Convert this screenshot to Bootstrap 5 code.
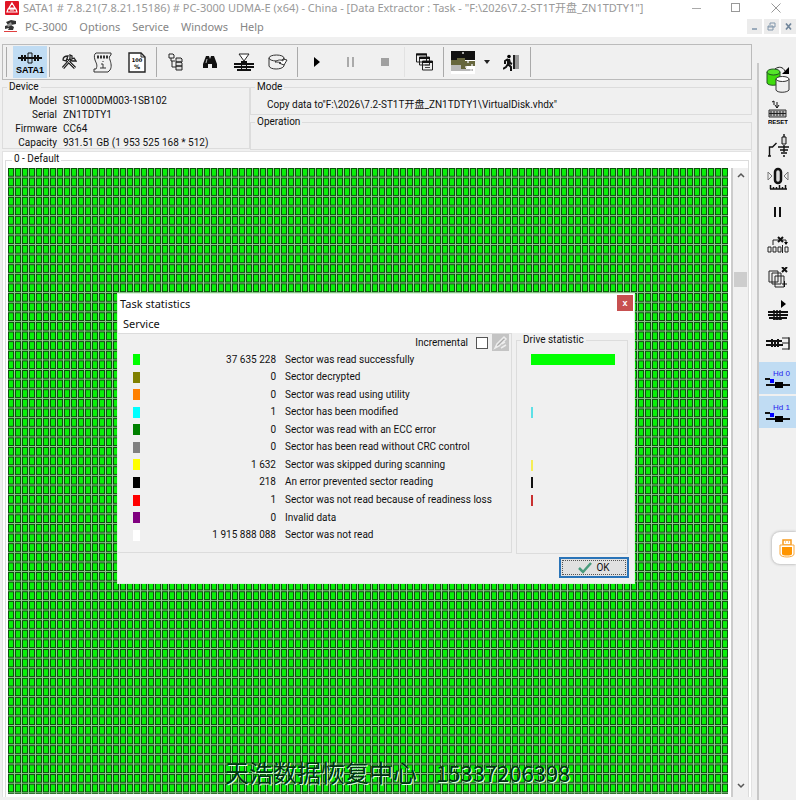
<!DOCTYPE html>
<html lang="en">
<head>
<meta charset="utf-8">
<meta name="viewport" content="width=device-width, initial-scale=1">
<title>PC-3000 Data Extractor</title>
<link href="https://cdn.jsdelivr.net/npm/bootstrap@5.3.0/dist/css/bootstrap.min.css" rel="stylesheet">
<style>
body{font:10px/14px Roboto,"Liberation Sans","Noto Sans CJK SC",sans-serif;color:#111;background:#f0f0f0}
button{font:inherit;color:inherit;border:0;background:none;padding:0}
svg{display:block;flex:none}
.ui-title,.ui-menu{font-family:"Noto Sans","Noto Sans CJK SC",sans-serif;font-size:11px;color:#999;background:#fff}
.ui-title{height:16px;line-height:16px;padding-left:5px}
.ui-title .cap{width:40px;height:16px}
.ui-menu{height:21px;padding-left:4px}
.ui-menu a{color:#858585;text-decoration:none;margin-right:12px}
.mdi{width:15px;height:15px;margin-left:2px;background:#ececec}
.ui-left{padding:7px 5px 3px 2px}
.tools{height:36px;border:1px solid #bbb;padding-left:1px}
.tbtn{width:34px;height:32px}
.on{background:#c0dcf3}
.sep{width:5px;height:30px;background:linear-gradient(#aaa,#aaa) 2px 0/1px 100% no-repeat}
.sep.pale{opacity:.2}
fieldset{border:1px solid #dcdcdc;min-width:0}
legend{float:none;width:auto;font-size:10px;line-height:14px;margin:0 0 0 4px;padding:0 2px}
.info{height:69px}
.device{width:248px}
.device dl{display:grid;grid-template-columns:54px 1fr;column-gap:6px}
.device dt{font-weight:400;text-align:right}
.device dd{margin:0}
.half{height:35px}
.map{background:#fff;margin-top:2px;padding:0 2px 0 2px;border:1px solid #e2e2e2;border-bottom:0}
.map fieldset{padding:0 0 0 2px;border-bottom:0}
.map legend{padding-bottom:2px}
.cells{min-height:300px;margin-bottom:3px}
.scroll{width:17px;margin-left:3px;background:#f0f0f0;border-left:2px solid #ccc}
.thumb{height:15px;margin:94px 1px 0 1px;background:#cdcdcd}
.side{width:39px;margin-top:26px;border-left:2px solid #c8c8c8}
.sbtn{width:37px;height:33px}
.sbtn.on{height:32px;margin-top:2px}
.dlg{position:absolute;left:118px;top:294px;width:516px;background:#f0f0f0;box-shadow:0 0 0 1px #d8f4d8}
.dlg-top{background:#fff;font-family:"Noto Sans",sans-serif;font-size:11px;height:39px}
.dlg-top h1{font-size:11px;line-height:20px;font-weight:400;margin:0;padding-left:2px}
.xbtn{width:16px;height:16px;background:#c75050;color:#fff;font:bold 9px/14px "Liberation Sans",sans-serif;margin:1px 1px 0 0}
.dlg-top a{color:#111;text-decoration:none;padding-left:5px;line-height:20px}
.list-pane{width:394px;height:220px;border:1px solid #dcdcdc;border-left:0}
.incr{padding-right:2px}
.stats{width:100%;height:193px}
.stats td{padding:0;vertical-align:middle;line-height:14px}
.stats .sw{width:38px;padding-left:15px}
.stats .num{width:129px;text-align:right;padding-right:9px}
.chip{display:block;width:7px;height:11px}
.drive{width:112px;height:221px;margin-left:4px}
.bars{display:grid;grid-template-rows:repeat(11,1fr);height:193px;margin-top:4px;padding-left:14px;align-items:center}
.bars span{height:11px;width:2px}
.bars .full{width:84px}
.okbtn{width:70px;height:21px;border:2px solid #2a74b8;background:#e1e1e1;outline:1px dotted #555;outline-offset:-4px;margin:3px 5px 5px 0}
.tick-box{appearance:none;width:12px;height:12px;border:1px solid #555;background:#fff;margin:0}
.edit{width:17px;height:17px;background:#c4c4c4}
.caption{position:absolute;left:0;right:0;bottom:11px;padding-left:0;font:24px/34px "Noto Sans CJK SC",sans-serif;color:#031;text-shadow:1px 1px 0 #dfd;pointer-events:none}
.caption .tel{font-size:22px;margin-left:19px}
.caption p{margin:0 0 0 225px}
.usb{position:absolute;right:0;top:532px;width:24px;height:32px;background:#fff;border-radius:8px 0 0 8px;box-shadow:0 0 3px #999;padding:0 0 0 7px}
</style>
<script src="https://cdn.jsdelivr.net/npm/bootstrap@5.3.0/dist/js/bootstrap.bundle.min.js"></script>
</head>
<body class="position-relative d-flex flex-column min-vh-100 overflow-hidden">
<header>
<div class="ui-title d-flex align-items-center">
<svg width="14" height="14" viewBox="0 0 14 14"><rect width="14" height="14" rx="1" fill="#e01525"/><path d="M7 2 10 7H4ZM3 8h8l1 3H2Z" fill="none" stroke="#fff" stroke-width="1.2"/><path d="M5 9h4" stroke="#fff"/></svg>
<span class="ms-1 me-auto text-nowrap">SATA1 # 7.8.21(7.8.21.15186) # PC-3000 UDMA-E (x64) - China - [Data Extractor : Task - "F:\2026\7.2-ST1T开盘_ZN1TDTY1"]</span>
<button class="cap d-flex align-items-center justify-content-center" aria-label="Minimize"><svg width="10" height="10"><path d="M1 5.500h9" stroke="#aaa"/></svg></button>
<button class="cap d-flex align-items-center justify-content-center" aria-label="Maximize"><svg width="10" height="10"><rect x=".5" y=".5" width="8" height="8" fill="none" stroke="#999"/></svg></button>
<button class="cap d-flex align-items-center justify-content-center" aria-label="Close"><svg width="10" height="10"><path d="m.5.500 9 9m0-9-9 9" stroke="#999"/></svg></button>
</div>
<nav class="ui-menu d-flex align-items-center">
<svg class="me-2" width="13" height="13" viewBox="0 0 13 13"><path d="M2 2 7 0l5 1v3L7 5l3 2-1 3H4l1-2-4 1V6l3-1Z" fill="#333"/><path d="m3 5 4-3 1 3-4 2Z" fill="#999"/><path d="M0 11.500h13" stroke="#e04040"/></svg>
<a href="#">PC-3000</a><a href="#">Options</a><a href="#">Service</a><a href="#">Windows</a><a href="#" class="me-auto">Help</a>
<button class="mdi d-flex align-items-center justify-content-center" aria-label="Minimize child"><svg width="9" height="9"><path d="M2 7h5" stroke="#8196ab" stroke-width="1.500"/></svg></button>
<button class="mdi d-flex align-items-center justify-content-center" aria-label="Restore child"><svg width="9" height="9"><path d="M3 3V1h5v4H6M1 4h5v4H1ZM1 5h5" fill="none" stroke="#8196ab"/></svg></button>
<button class="mdi d-flex align-items-center justify-content-center" aria-label="Close child"><svg width="9" height="9"><path d="m2 1.500 5 6m0-6-5 6" stroke="#71869b" stroke-width="1.700"/></svg></button>
</nav>
</header>
<div class="d-flex flex-grow-1">
<main class="ui-left flex-grow-1 d-flex flex-column">
<div class="tools d-flex align-items-center" role="toolbar">
<span class="sep me-1"></span>
<button class="tbtn on d-grid justify-content-center align-content-center" aria-label="SATA1"><svg width="30" height="28" viewBox="0 0 30 28"><path d="M3 10h24M7 7v6M10 7v6M20 7v6M23 7v6" stroke="#111" stroke-width="2"/><path d="M13 5v10M17 5v10M13 5h4M13 15h4" stroke="#111"/><text x="15" y="25" text-anchor="middle" font-family="Liberation Sans" font-weight="700" font-size="9">SATA1</text></svg></button>
<span class="sep"></span>
<button class="tbtn d-grid justify-content-center align-content-center" aria-label="Utilities"><svg width="16" height="16" viewBox="0 0 16 16"><path d="m2 14 8-9M14 14 5 5" stroke="#222" stroke-width="3"/><path d="m2 14 8-9M14 14 5 5" stroke="#eee" stroke-width=".8"/><path d="M2 6c0-3 2-4 5-4L5 7ZM9 1v4l2 2h4l-2-3-2 1V2Z" fill="#eee" stroke="#222" stroke-width="1.300"/></svg></button>
<button class="tbtn d-grid justify-content-center align-content-center" aria-label="Drive information"><svg width="20" height="21" viewBox="0 0 20 21"><path d="M3 1h15v2c-2 1-2 3-1 5 1 3 2 7 0 10l-2 2H1v-3h2c2-4 0-6-1-9C1 5 1 2 3 1Z" fill="none" stroke="#333"/><path d="M4 5h11" stroke="#333" stroke-width="3" stroke-dasharray="2 1"/><path d="M10 9v1m-2 2h2v4m-3 0h6" fill="none" stroke="#333"/></svg></button>
<button class="tbtn d-grid justify-content-center align-content-center" aria-label="Progress report"><svg width="18" height="21" viewBox="0 0 18 21"><path d="M1 1h12l4 4v15H1Z" fill="#fff" stroke="#222" stroke-width="1.400"/><path d="M13 1v4h4" fill="none" stroke="#222"/><text x="9" y="10" text-anchor="middle" font-family="DejaVu Sans" font-weight="700" font-size="5">100</text><text x="9" y="17" text-anchor="middle" font-family="DejaVu Sans" font-weight="700" font-size="6">%</text></svg></button>
<span class="sep"></span>
<button class="tbtn d-grid justify-content-center align-content-center" aria-label="Map tree"><svg width="16" height="18" viewBox="0 0 16 18"><path d="M1 1h4l1 1v3H1ZM3 5v3h4m-3 0v6h4" fill="none" stroke="#222"/><path d="M8 5h5l1 1v3H8ZM8 9h5l1 1v3H8ZM8 13h6v4H8Z" fill="#ddd" stroke="#222"/></svg></button>
<button class="tbtn d-grid justify-content-center align-content-center" aria-label="Find"><svg width="14" height="13" viewBox="0 0 14 13"><path d="M3 0h3l1 3 1-3h3l3 8v4H9V8H5v4H0V8Z" fill="#111"/><path d="M4 3 3 7" stroke="#ddd" stroke-width=".8"/></svg></button>
<button class="tbtn d-grid justify-content-center align-content-center" aria-label="Head map"><svg width="20" height="19" viewBox="0 0 20 19"><path d="M5 1h10l-5 7Z" fill="#fff" stroke="#222"/><path d="M0 11h20M0 14h20M3 17h14" stroke="#111" stroke-width="2"/><path d="M7 8h6v10H7Z" fill="#111"/><path d="M8 12.500h4M8 15.500h4" stroke="#ddd"/></svg></button>
<button class="tbtn d-grid justify-content-center align-content-center" aria-label="Export"><svg width="20" height="16" viewBox="0 0 20 16"><path d="M1 4v8c1 4 13 4 15 0v-2M16 6V4" fill="none" stroke="#333"/><ellipse cx="8.500" cy="4" rx="7.500" ry="3" fill="none" stroke="#333"/><path d="M7 8c4-3 6-2 8-1V5l4 1-3 5-5-2h2c-1-1-4-1-6-1Z" fill="#fff" stroke="#333"/></svg></button>
<span class="sep"></span>
<button class="tbtn d-grid justify-content-center align-content-center" aria-label="Start"><svg width="6" height="10"><path d="m0 0 6 5-6 5Z"/></svg></button>
<button class="tbtn d-grid justify-content-center align-content-center" aria-label="Pause"><svg width="8" height="10"><path d="M1 0v10M6 0v10" stroke="#aaa" stroke-width="2"/></svg></button>
<button class="tbtn d-grid justify-content-center align-content-center" aria-label="Stop"><svg width="8" height="8"><path d="M0 0h8v8H0Z" fill="#a0a0a0"/></svg></button>
<span class="sep pale"></span>
<button class="tbtn d-grid justify-content-center align-content-center" aria-label="Windows list"><svg width="17" height="18" viewBox="0 0 17 18"><g fill="#eee" stroke="#222"><path d="M.5 1h10v8H.5ZM3.500 4h10v8h-10ZM6.500 8h10v9h-10Z"/></g><path d="M0 1.500h11M3 5h11M6 9h11" stroke="#111" stroke-width="2"/><path d="M9 12h5M9 14.500h5" stroke="#444"/></svg></button>
<span class="sep"></span>
<button class="tbtn d-grid justify-content-center align-content-center" aria-label="Colour map"><svg width="24" height="23" viewBox="0 0 24 23"><path d="M0 0h24v23H0Z" fill="#fff"/><path d="M0 0h24v9H0Z" fill="#111"/><path d="M0 9h6V7h8v3h10v5h-9v3h-5v-4H0Z" fill="#66663c"/><path d="M0 14h10v4h12v2H0Z" fill="#b8b8b8"/><path d="M11 2h2M16 11h2M20 14h2M14 16h2M19 19h2" stroke="#ddd" stroke-width="1.500"/></svg></button>
<button class="d-flex justify-content-center px-1" aria-label="Colour map options"><svg width="6" height="4"><path d="M0 0h6L3 4Z" fill="#222"/></svg></button>
<button class="tbtn d-grid justify-content-center align-content-center" aria-label="Exit"><svg width="17" height="17" viewBox="0 0 17 17"><path d="M10 1h2v14h-2Z" fill="#222"/><path d="M12 1h4v14h-4Z" fill="#999"/><circle cx="6" cy="2.500" r="1.800"/><path d="M5 5 2 7v3M6 5l1 4 2 1M5 5v5l3 3v4M5 10l-2 3-3 2" fill="none" stroke="#111" stroke-width="2"/></svg></button>
<span class="sep"></span>
</div>
<section class="info d-flex">
<fieldset class="device"><legend>Device</legend><dl class="mb-0"><dt>Model</dt><dd>ST1000DM003-1SB102</dd><dt>Serial</dt><dd>ZN1TDTY1</dd><dt>Firmware</dt><dd>CC64</dd><dt>Capacity</dt><dd>931.51 GB (1 953 525 168 * 512)</dd></dl></fieldset>
<div class="flex-grow-1">
<fieldset class="half"><legend>Mode</legend><div class="ps-3 pt-1">Copy data to"F:\2026\7.2-ST1T开盘_ZN1TDTY1\VirtualDisk.vhdx"</div></fieldset>
<fieldset class="half"><legend>Operation</legend></fieldset>
</div>
</section>
<section class="map flex-grow-1 d-flex">
<fieldset class="flex-grow-1 d-flex flex-column"><legend>0 - Default</legend>
<div class="d-flex flex-grow-1">
<div class="cells flex-grow-1 position-relative"><svg class="position-absolute w-100 h-100" aria-label="Sector map"><defs><pattern id="cell" width="7" height="9.620" patternUnits="userSpaceOnUse"><path d="M0 0h7v10H0Z" fill="#96c896"/><path d="M0 0h6v8.700H0Z" fill="#0d4f0d"/><path d="M1 1h4v6.700H1Z" fill="#08f008"/></pattern></defs><rect width="100%" height="100%" fill="url(#cell)"/></svg></div>
<div class="scroll d-flex flex-column">
<svg class="mx-auto mt-1" width="8" height="6"><path d="m1 5 3-3 3 3" fill="none" stroke="#555" stroke-width="1.500"/></svg>
<div class="thumb"></div>
<svg class="mx-auto mt-auto mb-2" width="8" height="6"><path d="m1 1 3 3 3-3" fill="none" stroke="#555" stroke-width="1.500"/></svg>
</div>
</div>
</fieldset>
</section>
</main>
<aside class="side flex-shrink-0" role="toolbar">
<button class="sbtn d-grid justify-content-center align-content-center" aria-label="Copy drive"><svg width="24" height="28" viewBox="0 0 24 28"><path d="M1 6v11c1 3 11 3 13 0V6" fill="#3fdc0c" stroke="#252"/><ellipse cx="7.500" cy="6" rx="6.500" ry="3" fill="#55e52a" stroke="#252"/><path d="M10 13v11c1 3 11 3 13 0V13" fill="#eee" stroke="#333"/><ellipse cx="16.500" cy="13" rx="6.500" ry="2.500" fill="#fff" stroke="#333"/><path d="M9 3c4-3 8-2 10 2" fill="none" stroke="#222"/><path d="M23 1v7h-7Z"/></svg></button>
<button class="sbtn d-grid justify-content-center align-content-center" aria-label="Reset"><svg width="20" height="25" viewBox="0 0 20 25"><path d="m4 2 2-1v4M9 2v6M7 5l2 3 2-3" fill="none" stroke="#111"/><path d="M1 10h17v7H1Z" fill="#bbb" stroke="#333"/><path d="M3 11v5m3-5v5m3-5v5m3-5v5m3-5v5M1 13.500h17" stroke="#222"/><text x="10" y="24" text-anchor="middle" font-family="Liberation Sans" font-weight="700" font-size="6">RESET</text></svg></button>
<button class="sbtn d-grid justify-content-center align-content-center" aria-label="Power"><svg width="22" height="23" viewBox="0 0 22 23"><path d="M1 22h3M2.500 22v-9h3l4-4M11 13h11M17 0v4m0 7v7M13 16h8M14 19h6m-4 3h2" fill="none" stroke="#111" stroke-width="1.400"/><path d="M15 3h4v7h-4Z" fill="#ddd" stroke="#111"/></svg></button>
<button class="sbtn d-grid justify-content-center align-content-center" aria-label="Position"><svg width="22" height="24" viewBox="0 0 22 24"><path d="m1 5 4 4-4 4ZM21 5l-4 4 4 4Z" fill="#eee" stroke="#777"/><rect x="8" y="2" width="6" height="14" rx="3" fill="#ddd" stroke="#111" stroke-width="2.500"/><path d="M3 22h17M3.500 18v4m3-2v2m3-2v2m3-4v4m3-2v2m3-4v4" stroke="#111" stroke-width="1.500"/></svg></button>
<button class="sbtn d-grid justify-content-center align-content-center" aria-label="Pause task"><svg width="8" height="10"><path d="M1 0v10M6 0v10" stroke="#111" stroke-width="2"/></svg></button>
<button class="sbtn d-grid justify-content-center align-content-center" aria-label="Clear sectors"><svg width="22" height="18" viewBox="0 0 22 18"><path d="M1 11h3v5H1ZM6 11h3v5H6ZM11 11h3v5h-3ZM18 11h3v5h-3ZM15.500 9v8M6 9V4h13v4" fill="none" stroke="#222"/><path d="m11 1 5 5m0-5-5 5" stroke="#111" stroke-width="2"/><path d="m17 6 2 3 2-3Z"/></svg></button>
<button class="sbtn d-grid justify-content-center align-content-center" aria-label="Clear copies"><svg width="20" height="21" viewBox="0 0 20 21"><g fill="#eee" stroke="#222"><path d="M1 4h9v11H1ZM4 6h9v11H4ZM7 9h9v11H7Z"/></g><path d="m14 0 5 5m0-5-5 5" stroke="#111" stroke-width="2"/><path d="M14 17h5M16.500 14v6" stroke="#111"/></svg></button>
<button class="sbtn d-grid justify-content-center align-content-center" aria-label="Start heads"><svg width="20" height="21" viewBox="0 0 20 21"><path d="m13 0 5 4-5 4Z"/><path d="M0 12h20M0 15h20M1 18h18" stroke="#111" stroke-width="2"/><path d="M6 10v10M9 10v10M12 10v10M5 19h9" stroke="#111" stroke-width="1.500"/></svg></button>
<button class="sbtn d-grid justify-content-center align-content-center" aria-label="Heads"><svg width="24" height="13" viewBox="0 0 24 13"><path d="M0 4h16M0 8h17M6 2v8M9 3v7M12 2v8" stroke="#111" stroke-width="2"/><path d="M16 1h7v11h-7M16 6h7M23 0v13" fill="none" stroke="#222"/></svg></button>
<button class="sbtn on d-grid justify-content-center align-content-center" aria-label="Hd 0"><svg width="26" height="24" viewBox="0 0 26 24"><text x="25" y="10" text-anchor="end" font-family="Liberation Sans" font-size="8" fill="#22e">Hd 0</text><path d="M0 13h5M1 19h24" stroke="#111" stroke-width="2"/><path d="M5 13h4v4H5Z" fill="#00f"/><path d="M10 16h8v6h-8Z"/></svg></button>
<button class="sbtn on d-grid justify-content-center align-content-center" aria-label="Hd 1"><svg width="26" height="24" viewBox="0 0 26 24"><text x="25" y="10" text-anchor="end" font-family="Liberation Sans" font-size="8" fill="#22e">Hd 1</text><path d="M0 13h5M1 19h24" stroke="#111" stroke-width="2"/><path d="M5 13h4v4H5Z" fill="#00f"/><path d="M10 16h8v6h-8Z"/></svg></button>
</aside>
</div>
<div class="dlg" role="dialog" aria-labelledby="dlg-title">
<div class="dlg-top"><div class="d-flex justify-content-between"><h1 id="dlg-title">Task statistics</h1><button class="xbtn" aria-label="Close dialog">x</button></div><a href="#">Service</a></div>
<div class="d-flex">
<div class="list-pane">
<div class="incr d-flex justify-content-end align-items-center gap-1"><label for="inc">Incremental</label><input class="tick-box ms-1" type="checkbox" id="inc"><button class="edit" aria-label="Edit"><svg width="17" height="17"><path d="m3 14 2-4 7-7 2 2-7 7Zm7-4 3-2m-4 6 5-3" fill="#aaa" stroke="#eee" stroke-width="1.500"/></svg></button></div>
<table class="stats"><tbody>
<tr><td class="sw"><span class="chip" style="background:#0f0"></span></td><td class="num">37 635 228</td><td>Sector was read successfully</td></tr>
<tr><td class="sw"><span class="chip" style="background:#808000"></span></td><td class="num">0</td><td>Sector decrypted</td></tr>
<tr><td class="sw"><span class="chip" style="background:#ff8000"></span></td><td class="num">0</td><td>Sector was read using utility</td></tr>
<tr><td class="sw"><span class="chip" style="background:#0ff"></span></td><td class="num">1</td><td>Sector has been modified</td></tr>
<tr><td class="sw"><span class="chip" style="background:#008000"></span></td><td class="num">0</td><td>Sector was read with an ECC error</td></tr>
<tr><td class="sw"><span class="chip" style="background:#808080"></span></td><td class="num">0</td><td>Sector has been read without CRC control</td></tr>
<tr><td class="sw"><span class="chip" style="background:#ff0"></span></td><td class="num">1 632</td><td>Sector was skipped during scanning</td></tr>
<tr><td class="sw"><span class="chip" style="background:#000"></span></td><td class="num">218</td><td>An error prevented sector reading</td></tr>
<tr><td class="sw"><span class="chip" style="background:#f00"></span></td><td class="num">1</td><td>Sector was not read because of readiness loss</td></tr>
<tr><td class="sw"><span class="chip" style="background:#800080"></span></td><td class="num">0</td><td>Invalid data</td></tr>
<tr><td class="sw"><span class="chip" style="background:#fff"></span></td><td class="num">1 915 888 088</td><td>Sector was not read</td></tr>
</tbody></table>
</div>
<fieldset class="drive"><legend>Drive statistic</legend><div class="bars"><span class="full" style="background:#0f0"></span><i></i><i></i><span style="background:#5de0e6"></span><i></i><i></i><span style="background:#f5ee55"></span><span style="background:#111"></span><span style="background:#c83030"></span><i></i><i></i></div></fieldset>
</div>
<div class="d-flex justify-content-end"><button class="okbtn d-flex align-items-center justify-content-center"><svg class="me-1" width="14" height="12"><path d="m1 6 4 4 8-9" fill="none" stroke="#4a9b7d" stroke-width="2.500"/></svg>OK</button></div>
</div>
<div class="caption"><p>天浩数据恢复中心<span class="tel">15337206398</span></p></div>
<button class="usb" aria-label="USB drive"><svg width="16" height="19" viewBox="0 0 16 19"><path d="M4 1h8v5H4Z" fill="#fff" stroke="#f79a1c" stroke-width="1.500"/><path d="M6 3h1m2 0h1" stroke="#f79a1c"/><path d="M1 6h14v9c0 4-14 4-14 0Z" fill="#fff" stroke="#f9a83c"/><path d="M3 8h10v7c0 2-10 2-10 0Z" fill="#ff9500"/></svg></button>
</body>
</html>
